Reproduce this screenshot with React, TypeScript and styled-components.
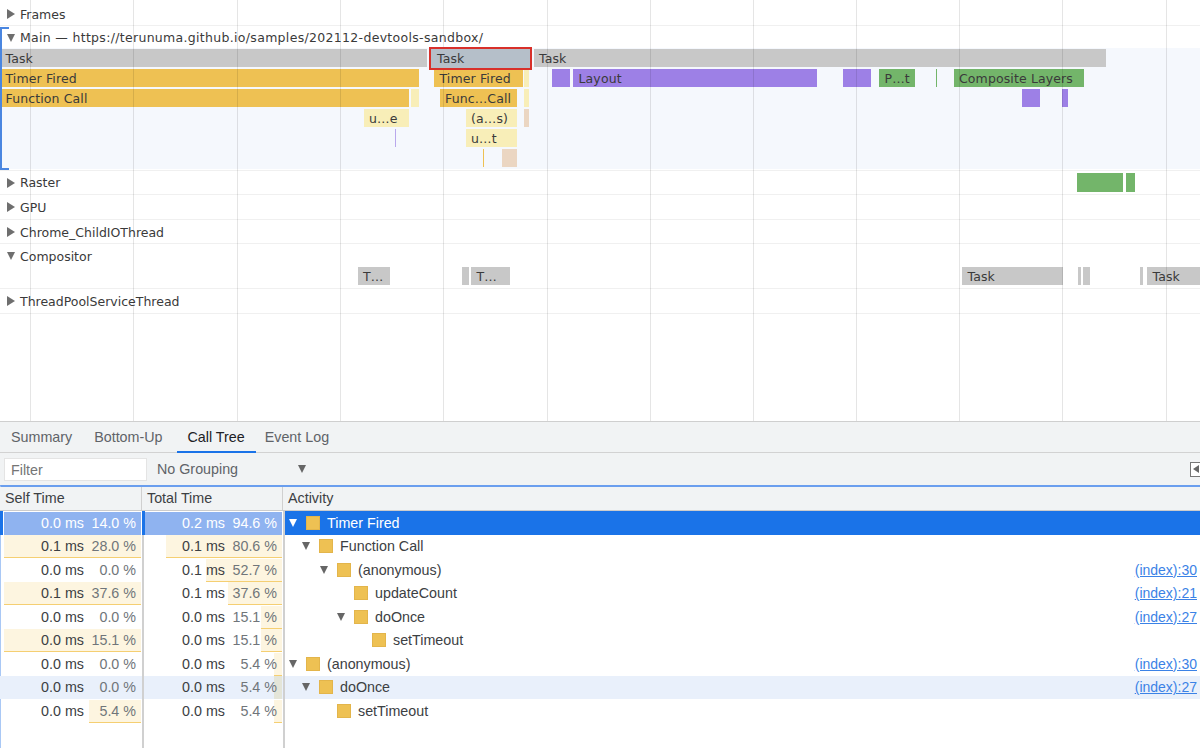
import styled, { createGlobalStyle } from 'styled-components';

const GlobalStyle = createGlobalStyle`
  html, body {
    margin: 0;
    padding: 0;
    background: #fff;
    overflow: hidden;
  }
`;

const Page = styled.div`
  width: 1200px;
  height: 748px;
  display: flex;
  flex-direction: column;
  overflow: hidden;
  font-family: 'Liberation Sans', Arial, sans-serif;
`;

/* ---------- timeline ---------- */

const Timeline = styled.div`
  position: relative;
  height: 421px;
  flex: none;
  font-family: 'DejaVu Sans', sans-serif;
  font-size: 12.5px;
  color: #3a3a3a;
`;

const GridLine = styled.div<{ $x: number }>`
  position: absolute;
  top: 0;
  bottom: 0;
  left: ${({ $x }) => $x}px;
  width: 1px;
  background: rgba(0, 0, 0, 0.1);
  z-index: 3;
`;

const Track = styled.div<{ $height: number }>`
  position: relative;
  height: ${({ $height }) => $height}px;
  box-sizing: border-box;
  border-bottom: 1.5px solid #f0f0f0;
`;

const TrackHeader = styled.div<{ $top?: number; $height?: number }>`
  display: flex;
  align-items: center;
  gap: 5px;
  height: ${({ $height }) => $height || 24}px;
  padding-left: 7px;
  padding-top: ${({ $top }) => $top || 0}px;
  box-sizing: border-box;
  white-space: nowrap;
`;

const MainTitle = styled.span`
  letter-spacing: 0.31px;
`;

const Arrow = styled.span<{ $open?: boolean; $color?: string }>`
  flex: none;
  display: inline-block;
  width: 0;
  height: 0;
  ${({ $open, $color }) =>
    $open
      ? `border-left: 4.5px solid transparent;
         border-right: 4.5px solid transparent;
         border-top: 8px solid ${$color || '#6e6e6e'};`
      : `border-top: 5px solid transparent;
         border-bottom: 5px solid transparent;
         border-left: 8px solid ${$color || '#6e6e6e'};`}
`;

const FlameArea = styled.div<{ $tint?: boolean; $height: number }>`
  position: relative;
  height: ${({ $height }) => $height}px;
  background: ${({ $tint }) => ($tint ? '#f5f8fd' : 'transparent')};
`;

const Bracket = styled.div`
  position: absolute;
  left: 0;
  top: 27px;
  width: 9px;
  height: 143px;
  box-sizing: border-box;
  border: 2px solid #4a86e0;
  border-right: none;
  z-index: 4;
`;

const Bar = styled.div<{ $x: number; $w: number; $y: number; $color: string }>`
  position: absolute;
  left: ${({ $x }) => $x}px;
  width: ${({ $w }) => $w}px;
  top: ${({ $y }) => $y}px;
  height: 18.8px;
  line-height: 19px;
  padding-left: ${({ $w }) => ($w < 10 ? 0 : 5.5)}px;
  box-sizing: border-box;
  background: ${({ $color }) => $color};
  letter-spacing: 0.12px;
  white-space: nowrap;
  overflow: hidden;
`;

const SelectedBar = styled(Bar)`
  border: 2px solid #d8302a;
  line-height: 20px;
  padding-left: 6px;
  height: 23px;
  z-index: 4;
`;

/* ---------- details pane ---------- */

const Tabs = styled.div`
  display: flex;
  height: 32px;
  flex: none;
  box-sizing: border-box;
  background: #f1f3f4;
  border-top: 1px solid #cfcfcf;
  border-bottom: 1.5px solid #d2d2d2;
  font-size: 14.3px;
`;

const Tab = styled.div<{ $active?: boolean }>`
  padding: 0 11px;
  line-height: 30px;
  height: 31px;
  box-sizing: border-box;
  color: ${({ $active }) => ($active ? '#202124' : '#5f6368')};
  border-bottom: ${({ $active }) => ($active ? '2px solid #1a73e8' : 'none')};
  margin: ${({ $active }) => ($active ? '0 -2px 0 3px' : '0')};
`;

const Toolbar = styled.div`
  display: flex;
  align-items: center;
  height: 32px;
  flex: none;
  box-sizing: border-box;
  background: #f1f3f4;
  padding-left: 4px;
  font-size: 14.3px;
  color: #5f6368;
`;

const FilterInput = styled.div`
  width: 143px;
  height: 23px;
  line-height: 22px;
  box-sizing: border-box;
  padding-left: 6px;
  background: #fff;
  border: 1px solid #e4e4e4;
  color: #757575;
`;

const GroupSelect = styled.div`
  display: flex;
  align-items: center;
  width: 149px;
  margin-left: 10px;
  justify-content: space-between;
  box-sizing: border-box;
`;

const SidebarToggle = styled.div`
  margin-left: auto;
  width: 14px;
  height: 15px;
  margin-right: -4px;
  box-sizing: border-box;
  border: 1.5px solid #777;
  border-right: none;
  display: flex;
  align-items: center;
  padding-left: 2px;
  background: #fff;
`;

const ToggleArrow = styled.span`
  width: 0;
  height: 0;
  border-top: 4px solid transparent;
  border-bottom: 4px solid transparent;
  border-right: 6px solid #666;
`;

const Table = styled.div`
  flex: 1;
  display: flex;
  flex-direction: column;
  box-sizing: border-box;
  border-top: 2px solid #6a9eee;
  border-left: 1px solid #a9c8f5;
  font-size: 14.3px;
  color: #3c4043;
`;

const columns = 'grid-template-columns: 142px 141px 1fr;';

const HeaderRow = styled.div`
  display: grid;
  ${columns}
  height: 24px;
  flex: none;
  box-sizing: border-box;
  background: #f1f3f4;
  border-bottom: 1.5px solid #cccccc;
  margin-left: -1px;
`;

const HeaderCell = styled.div`
  padding-left: 5px;
  line-height: 22px;
  box-sizing: border-box;
  border-right: 1.5px solid #d0d0d0;
  color: #3c4043;
  &:last-child {
    border-right: none;
  }
`;

const Body = styled.div`
  flex: 1;
  position: relative;
  display: flex;
  flex-direction: column;
  margin-left: -1px;
  border-left: 1px solid #a9c8f5;
`;

const ColumnRule = styled.div<{ $x: number }>`
  position: absolute;
  top: 0;
  bottom: 0;
  left: ${({ $x }) => $x}px;
  width: 1.5px;
  background: #d0d0d0;
`;

const Row = styled.div<{ $hover?: boolean }>`
  display: grid;
  ${columns}
  height: 23.5px;
  flex: none;
  margin-left: -1px;
  background: ${({ $hover }) => ($hover ? '#e9f0fb' : 'transparent')};
`;

const TimeCell = styled.div<{ $selected?: boolean }>`
  position: relative;
  display: flex;
  justify-content: flex-end;
  align-items: center;
  padding-right: 6px;
  box-sizing: border-box;
  color: ${({ $selected }) => ($selected ? '#fff' : 'inherit')};
  ${({ $selected }) => ($selected ? 'border-left: 3px solid #1a73e8;' : '')}
`;

const PercentBar = styled.div<{ $color: string; $edge: string }>`
  position: absolute;
  right: 1px;
  top: 0.5px;
  bottom: 0;
  background: ${({ $color }) => $color};
  border-bottom: 1.5px solid ${({ $edge }) => $edge};
`;

const Ms = styled.span`
  position: relative;
`;

const Pct = styled.span<{ $selected?: boolean }>`
  position: relative;
  width: 52px;
  text-align: right;
  color: ${({ $selected }) => ($selected ? '#fff' : '#70757a')};
`;

const ActivityCell = styled.div<{ $indent: number; $selected?: boolean }>`
  display: flex;
  align-items: center;
  padding-left: ${({ $indent }) => $indent}px;
  background: ${({ $selected }) => ($selected ? '#1a73e8' : 'transparent')};
  color: ${({ $selected }) => ($selected ? '#fff' : 'inherit')};
`;

const ArrowSlot = styled.span`
  flex: none;
  width: 18px;
  display: flex;
  align-items: center;
  padding-left: 1px;
  box-sizing: border-box;
`;

const Swatch = styled.span`
  flex: none;
  width: 14px;
  height: 14px;
  box-sizing: border-box;
  background: #eec153;
  border: 1px solid #e3b54b;
  margin-right: 7px;
`;

const SourceLink = styled.a`
  margin-left: auto;
  margin-right: 3px;
  font-size: 14px;
  color: #3b82e6;
  text-decoration: underline;
`;

/* ---------- data ---------- */

const GRID = [30, 133, 237, 340, 443, 547, 650, 753, 856, 959, 1062, 1166];

const GREY = '#c8c8c8';
const ORANGE = '#eec153';
const PALE = '#f8eeb8';
const TAN = '#ebd6c2';
const PURPLE = '#9d80e6';
const GREEN = '#73b56a';

type TBar = { x: number; w: number; level: number; color: string; label?: string };

const MAIN_BARS: TBar[] = [
  { x: 0, w: 427, level: 0, color: GREY, label: 'Task' },
  { x: 533.5, w: 572, level: 0, color: GREY, label: 'Task' },
  { x: 0, w: 419, level: 1, color: ORANGE, label: 'Timer Fired' },
  { x: 434, w: 89, level: 1, color: ORANGE, label: 'Timer Fired' },
  { x: 524, w: 5, level: 1, color: PALE },
  { x: 552, w: 17.5, level: 1, color: PURPLE },
  { x: 573, w: 244, level: 1, color: PURPLE, label: 'Layout' },
  { x: 843, w: 28, level: 1, color: PURPLE },
  { x: 879, w: 35.5, level: 1, color: GREEN, label: 'P…t' },
  { x: 936, w: 1, level: 1, color: GREEN },
  { x: 953.5, w: 130, level: 1, color: GREEN, label: 'Composite Layers' },
  { x: 0, w: 408.5, level: 2, color: ORANGE, label: 'Function Call' },
  { x: 411, w: 8, level: 2, color: PALE },
  { x: 439.5, w: 77, level: 2, color: ORANGE, label: 'Func…Call' },
  { x: 524, w: 5, level: 2, color: PALE },
  { x: 1022, w: 18, level: 2, color: PURPLE },
  { x: 1061.5, w: 6.5, level: 2, color: PURPLE },
  { x: 363.5, w: 45, level: 3, color: PALE, label: 'u…e' },
  { x: 465.5, w: 51, level: 3, color: PALE, label: '(a…s)' },
  { x: 524, w: 5, level: 3, color: TAN },
  { x: 395, w: 1, level: 4, color: '#b9a8ec' },
  { x: 465.5, w: 36, level: 4, color: PALE, label: 'u…t' },
  { x: 502, w: 14.5, level: 4, color: PALE },
  { x: 483, w: 1, level: 5, color: '#eec153' },
  { x: 502, w: 14.5, level: 5, color: TAN },
];

const RASTER_BARS: TBar[] = [
  { x: 1077, w: 45.5, level: 0.12, color: GREEN },
  { x: 1126, w: 8.5, level: 0.12, color: GREEN },
];

const COMPOSITOR_BARS: TBar[] = [
  { x: 357.5, w: 32, level: 1.1, color: GREY, label: 'T…' },
  { x: 462, w: 6.5, level: 1.1, color: GREY },
  { x: 471, w: 38.5, level: 1.1, color: GREY, label: 'T…' },
  { x: 962, w: 100.5, level: 1.1, color: GREY, label: 'Task' },
  { x: 1078, w: 3, level: 1.1, color: GREY },
  { x: 1083, w: 7, level: 1.1, color: GREY },
  { x: 1140, w: 3, level: 1.1, color: GREY },
  { x: 1147, w: 53, level: 1.1, color: GREY, label: 'Task' },
];

type TPercent = { ms: string; pct: string; bar: number };
type TRow = {
  self: TPercent;
  total: TPercent;
  name: string;
  indent: number;
  open?: boolean;
  source?: string;
  selected?: boolean;
  hover?: boolean;
};

const ROWS: TRow[] = [
  { self: { ms: '0.0 ms', pct: '14.0 %', bar: 137 }, total: { ms: '0.2 ms', pct: '94.6 %', bar: 137 }, name: 'Timer Fired', indent: 5, open: true, selected: true },
  { self: { ms: '0.1 ms', pct: '28.0 %', bar: 137 }, total: { ms: '0.1 ms', pct: '80.6 %', bar: 116 }, name: 'Function Call', indent: 18, open: true },
  { self: { ms: '0.0 ms', pct: '0.0 %', bar: 0 }, total: { ms: '0.1 ms', pct: '52.7 %', bar: 76 }, name: '(anonymous)', indent: 36, open: true, source: '(index):30' },
  { self: { ms: '0.1 ms', pct: '37.6 %', bar: 137 }, total: { ms: '0.1 ms', pct: '37.6 %', bar: 54 }, name: 'updateCount', indent: 53, source: '(index):21' },
  { self: { ms: '0.0 ms', pct: '0.0 %', bar: 0 }, total: { ms: '0.0 ms', pct: '15.1 %', bar: 21 }, name: 'doOnce', indent: 53, open: true, source: '(index):27' },
  { self: { ms: '0.0 ms', pct: '15.1 %', bar: 137 }, total: { ms: '0.0 ms', pct: '15.1 %', bar: 21 }, name: 'setTimeout', indent: 71 },
  { self: { ms: '0.0 ms', pct: '0.0 %', bar: 0 }, total: { ms: '0.0 ms', pct: '5.4 %', bar: 8 }, name: '(anonymous)', indent: 5, open: true, source: '(index):30' },
  { self: { ms: '0.0 ms', pct: '0.0 %', bar: 0 }, total: { ms: '0.0 ms', pct: '5.4 %', bar: 8 }, name: 'doOnce', indent: 18, open: true, source: '(index):27', hover: true },
  { self: { ms: '0.0 ms', pct: '5.4 %', bar: 52 }, total: { ms: '0.0 ms', pct: '5.4 %', bar: 8 }, name: 'setTimeout', indent: 36 },
];

/* ---------- parts ---------- */

function Bars({ bars }: { bars: TBar[] }) {
  return (
    <>
      {bars.map((bar) => (
        <Bar
          key={`${bar.level}-${bar.x}`}
          $x={bar.x}
          $w={bar.w}
          $y={bar.level * 20 + 0.5}
          $color={bar.color}
        >
          {bar.label}
        </Bar>
      ))}
    </>
  );
}

function TimeColumn({ value, selected, hover }: { value: TPercent; selected?: boolean; hover?: boolean }) {
  const color = selected ? '#8fb3f0' : hover ? '#e4e5d8' : '#fdf5e0';
  const edge = selected ? '#8fb3f0' : hover ? '#e4e5d8' : '#f5cf72';
  return (
    <TimeCell $selected={selected}>
      {value.bar > 0 && (
        <PercentBar $color={color} $edge={edge} style={{ width: value.bar }} />
      )}
      <Ms>{value.ms}</Ms>
      <Pct $selected={selected}>{value.pct}</Pct>
    </TimeCell>
  );
}

export default function App(): JSX.Element {
  return (
    <Page>
      <GlobalStyle />
      <Timeline>
        {GRID.map((x) => (
          <GridLine key={x} $x={x} />
        ))}
        <Bracket />
        <Track $height={25.5}>
          <TrackHeader $top={3} $height={25}>
            <Arrow />
            Frames
          </TrackHeader>
        </Track>
        <Track $height={145}>
          <TrackHeader $height={22.5} $top={1.5}>
            <Arrow $open />
            <MainTitle>Main — https://terunuma.github.io/samples/202112-devtools-sandbox/</MainTitle>
          </TrackHeader>
          <FlameArea $tint $height={121}>
            <Bars bars={MAIN_BARS} />
            <SelectedBar $x={429} $w={103} $y={-1.5} $color="#b5bfc9">
              Task
            </SelectedBar>
          </FlameArea>
        </Track>
        <Track $height={24.5}>
          <TrackHeader>
            <Arrow />
            Raster
          </TrackHeader>
          <Bars bars={RASTER_BARS} />
        </Track>
        <Track $height={25}>
          <TrackHeader>
            <Arrow />
            GPU
          </TrackHeader>
        </Track>
        <Track $height={24}>
          <TrackHeader>
            <Arrow />
            Chrome_ChildIOThread
          </TrackHeader>
        </Track>
        <Track $height={45}>
          <TrackHeader>
            <Arrow $open />
            Compositor
          </TrackHeader>
          <Bars bars={COMPOSITOR_BARS} />
        </Track>
        <Track $height={24.5}>
          <TrackHeader>
            <Arrow />
            ThreadPoolServiceThread
          </TrackHeader>
        </Track>
      </Timeline>
      <Tabs>
        <Tab>Summary</Tab>
        <Tab>Bottom-Up</Tab>
        <Tab $active>Call Tree</Tab>
        <Tab>Event Log</Tab>
      </Tabs>
      <Toolbar>
        <FilterInput>Filter</FilterInput>
        <GroupSelect>
          No Grouping
          <Arrow $open $color="#666" />
        </GroupSelect>
        <SidebarToggle>
          <ToggleArrow />
        </SidebarToggle>
      </Toolbar>
      <Table>
        <HeaderRow>
          <HeaderCell>Self Time</HeaderCell>
          <HeaderCell>Total Time</HeaderCell>
          <HeaderCell>Activity</HeaderCell>
        </HeaderRow>
        <Body>
          <ColumnRule $x={141} />
          <ColumnRule $x={282} />
          {ROWS.map((row) => (
            <Row key={`${row.name}-${row.indent}-${row.self.pct}`} $hover={row.hover}>
              <TimeColumn value={row.self} selected={row.selected} hover={row.hover} />
              <TimeColumn value={row.total} selected={row.selected} hover={row.hover} />
              <ActivityCell $indent={row.indent} $selected={row.selected}>
                <ArrowSlot>
                  {row.open && <Arrow $open $color={row.selected ? '#fff' : '#666'} />}
                </ArrowSlot>
                <Swatch />
                {row.name}
                {row.source && <SourceLink>{row.source}</SourceLink>}
              </ActivityCell>
            </Row>
          ))}
        </Body>
      </Table>
    </Page>
  );
}
